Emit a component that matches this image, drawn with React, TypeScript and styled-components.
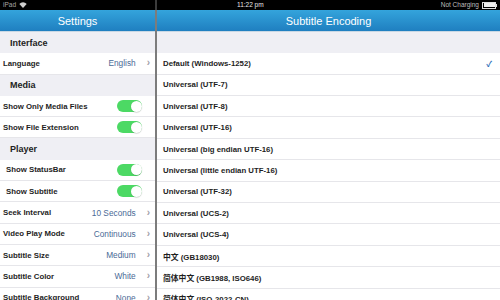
import styled, { createGlobalStyle } from 'styled-components';

const GlobalStyle = createGlobalStyle`
  html, body {
    margin: 0;
    padding: 0;
    width: 500px;
    height: 300px;
    overflow: hidden;
    background: #ffffff;
    font-family: "Liberation Sans", Arial, "Noto Sans CJK SC", sans-serif;
  }
`;

type Row =
  | { kind: 'section'; label: string }
  | { kind: 'value'; label: string; value: string; indent?: boolean }
  | { kind: 'toggle'; label: string; indent?: boolean };

const settings: Row[] = [
  { kind: 'section', label: 'Interface' },
  { kind: 'value', label: 'Language', value: 'English' },
  { kind: 'section', label: 'Media' },
  { kind: 'toggle', label: 'Show Only Media Files' },
  { kind: 'toggle', label: 'Show File Extension' },
  { kind: 'section', label: 'Player' },
  { kind: 'toggle', label: 'Show StatusBar', indent: true },
  { kind: 'toggle', label: 'Show Subtitle', indent: true },
  { kind: 'value', label: 'Seek Interval', value: '10 Seconds' },
  { kind: 'value', label: 'Video Play Mode', value: 'Continuous' },
  { kind: 'value', label: 'Subtitle Size', value: 'Medium' },
  { kind: 'value', label: 'Subtitle Color', value: 'White' },
  { kind: 'value', label: 'Subtitle Background', value: 'None' },
];

const encodings = [
  'Default (Windows-1252)',
  'Universal (UTF-7)',
  'Universal (UTF-8)',
  'Universal (UTF-16)',
  'Universal (big endian UTF-16)',
  'Universal (little endian UTF-16)',
  'Universal (UTF-32)',
  'Universal (UCS-2)',
  'Universal (UCS-4)',
  '中文 (GB18030)',
  '简体中文 (GB1988, ISO646)',
  '简体中文 (ISO-2022-CN)',
];

export default function App() {
  return <Screen>
    <GlobalStyle />
    <StatusBar>
      <StatusLeft>
        <span>iPad</span>
        <svg width="8" height="6" viewBox="0 0 8 6">
          <path d="M0.3 2 A5 5 0 0 1 7.7 2 L4 6 Z" fill="#cfcfcf" />
        </svg>
      </StatusLeft>
      <StatusDivider />
      <StatusRight>
        <Clock>11:22 pm</Clock>
        <Battery>
          <span>Not Charging</span>
          <BatteryBody><BatteryFill /></BatteryBody>
          <BatteryTip />
        </Battery>
      </StatusRight>
    </StatusBar>
    <Split>
      <LeftPanel>
        <NavBar>Settings</NavBar>
        {settings.map((row, i) => {
          if (row.kind === 'section') {
            return <SectionRow key={i}>{row.label}</SectionRow>;
          }
          return <SettingRow key={i} $indent={row.indent}>
            <Label>{row.label}</Label>
            {row.kind === 'value' ? <>
              <Value>{row.value}</Value>
              <Chevron>›</Chevron>
            </> : <Toggle><Knob /></Toggle>}
          </SettingRow>;
        })}
      </LeftPanel>
      <Divider />
      <RightPanel>
        <NavBar>Subtitle Encoding</NavBar>
        <SectionRow />
        {encodings.map((name, i) => (
          <EncodingRow key={name}>
            <Label>{name}</Label>
            {i === 0 && <Check>✓</Check>}
          </EncodingRow>
        ))}
      </RightPanel>
    </Split>
  </Screen>;
}

const Screen = styled.div`
  width: 500px;
  height: 300px;
  display: flex;
  flex-direction: column;
  overflow: hidden;
`;

const StatusBar = styled.div`
  height: 10px;
  flex-shrink: 0;
  background: #000;
  display: flex;
  color: #d8d8d8;
  font-size: 6.5px;
  line-height: 10px;
`;

const StatusLeft = styled.div`
  width: 155px;
  display: flex;
  align-items: center;
  gap: 3px;
  padding-left: 3px;
  box-sizing: border-box;
  color: #a8a8a8;
`;

const StatusDivider = styled.div`
  width: 2px;
  background: #3c3c3c;
`;

const StatusRight = styled.div`
  flex: 1;
  display: flex;
  align-items: center;
  justify-content: space-between;
  padding: 0 3px 0 80px;
`;

const Clock = styled.span`
  color: #e8e8e8;
`;

const Battery = styled.div`
  display: flex;
  align-items: center;
  gap: 3px;
  color: #bdbdbd;
`;

const BatteryBody = styled.div`
  width: 11px;
  height: 4px;
  border: 1px solid #ddd;
  padding: 0.5px;
  display: flex;
`;

const BatteryFill = styled.div`
  flex: 1;
  background: #eee;
`;

const BatteryTip = styled.div`
  width: 1px;
  height: 3px;
  margin-left: -3px;
  background: #ddd;
`;

const Split = styled.div`
  flex: 1;
  display: flex;
  min-height: 0;
`;

const LeftPanel = styled.div`
  width: 155px;
  display: flex;
  flex-direction: column;
  background: #fff;
`;

const RightPanel = styled.div`
  flex: 1;
  display: flex;
  flex-direction: column;
  background: #fff;
`;

const Divider = styled.div`
  width: 2px;
  background: #7c7c7c;
`;

const NavBar = styled.div`
  height: 21px;
  flex-shrink: 0;
  display: flex;
  align-items: center;
  justify-content: center;
  color: #fff;
  font-size: 11px;
  background: linear-gradient(#34a4dc, #1f7fc0);
  border-bottom: 1px solid #c9d8e4;
`;

const SectionRow = styled.div`
  height: 21.3px;
  flex-shrink: 0;
  display: flex;
  align-items: center;
  padding-left: 10px;
  background: #efeff4;
  font-size: 9px;
  font-weight: bold;
  color: #222;
  box-sizing: border-box;
`;

const SettingRow = styled.div<{ $indent?: boolean }>`
  height: 21.3px;
  flex-shrink: 0;
  display: flex;
  align-items: center;
  padding: 0 5px 0 ${p => (p.$indent ? '6px' : '3px')};
  border-bottom: 1px solid #e6e6ea;
  box-sizing: border-box;
`;

const EncodingRow = styled.div`
  height: 21.4px;
  flex-shrink: 0;
  display: flex;
  align-items: center;
  padding: 0 8px 0 6px;
  border-bottom: 1px solid #e6e6ea;
  box-sizing: border-box;
`;

const Label = styled.span`
  flex: 1;
  font-size: 7.8px;
  font-weight: bold;
  color: #1e1e1e;
  white-space: nowrap;
`;

const Value = styled.span`
  font-size: 8.3px;
  color: #4a6a96;
`;

const Chevron = styled.span`
  margin-left: 11px;
  font-size: 10px;
  line-height: 10px;
  color: #a0a0a8;
  font-weight: bold;
`;

const Toggle = styled.div`
  width: 25px;
  height: 12px;
  margin-right: 8px;
  border-radius: 6px;
  background: #4cd964;
  display: flex;
  justify-content: flex-end;
  align-items: center;
  padding: 0.5px;
  box-sizing: border-box;
`;

const Knob = styled.div`
  width: 11px;
  height: 11px;
  border-radius: 50%;
  background: #fff;
  box-shadow: 0 0.5px 1px rgba(0, 0, 0, 0.25);
`;

const Check = styled.span`
  font-size: 8px;
  font-weight: bold;
  color: #2f6fb8;
`;
